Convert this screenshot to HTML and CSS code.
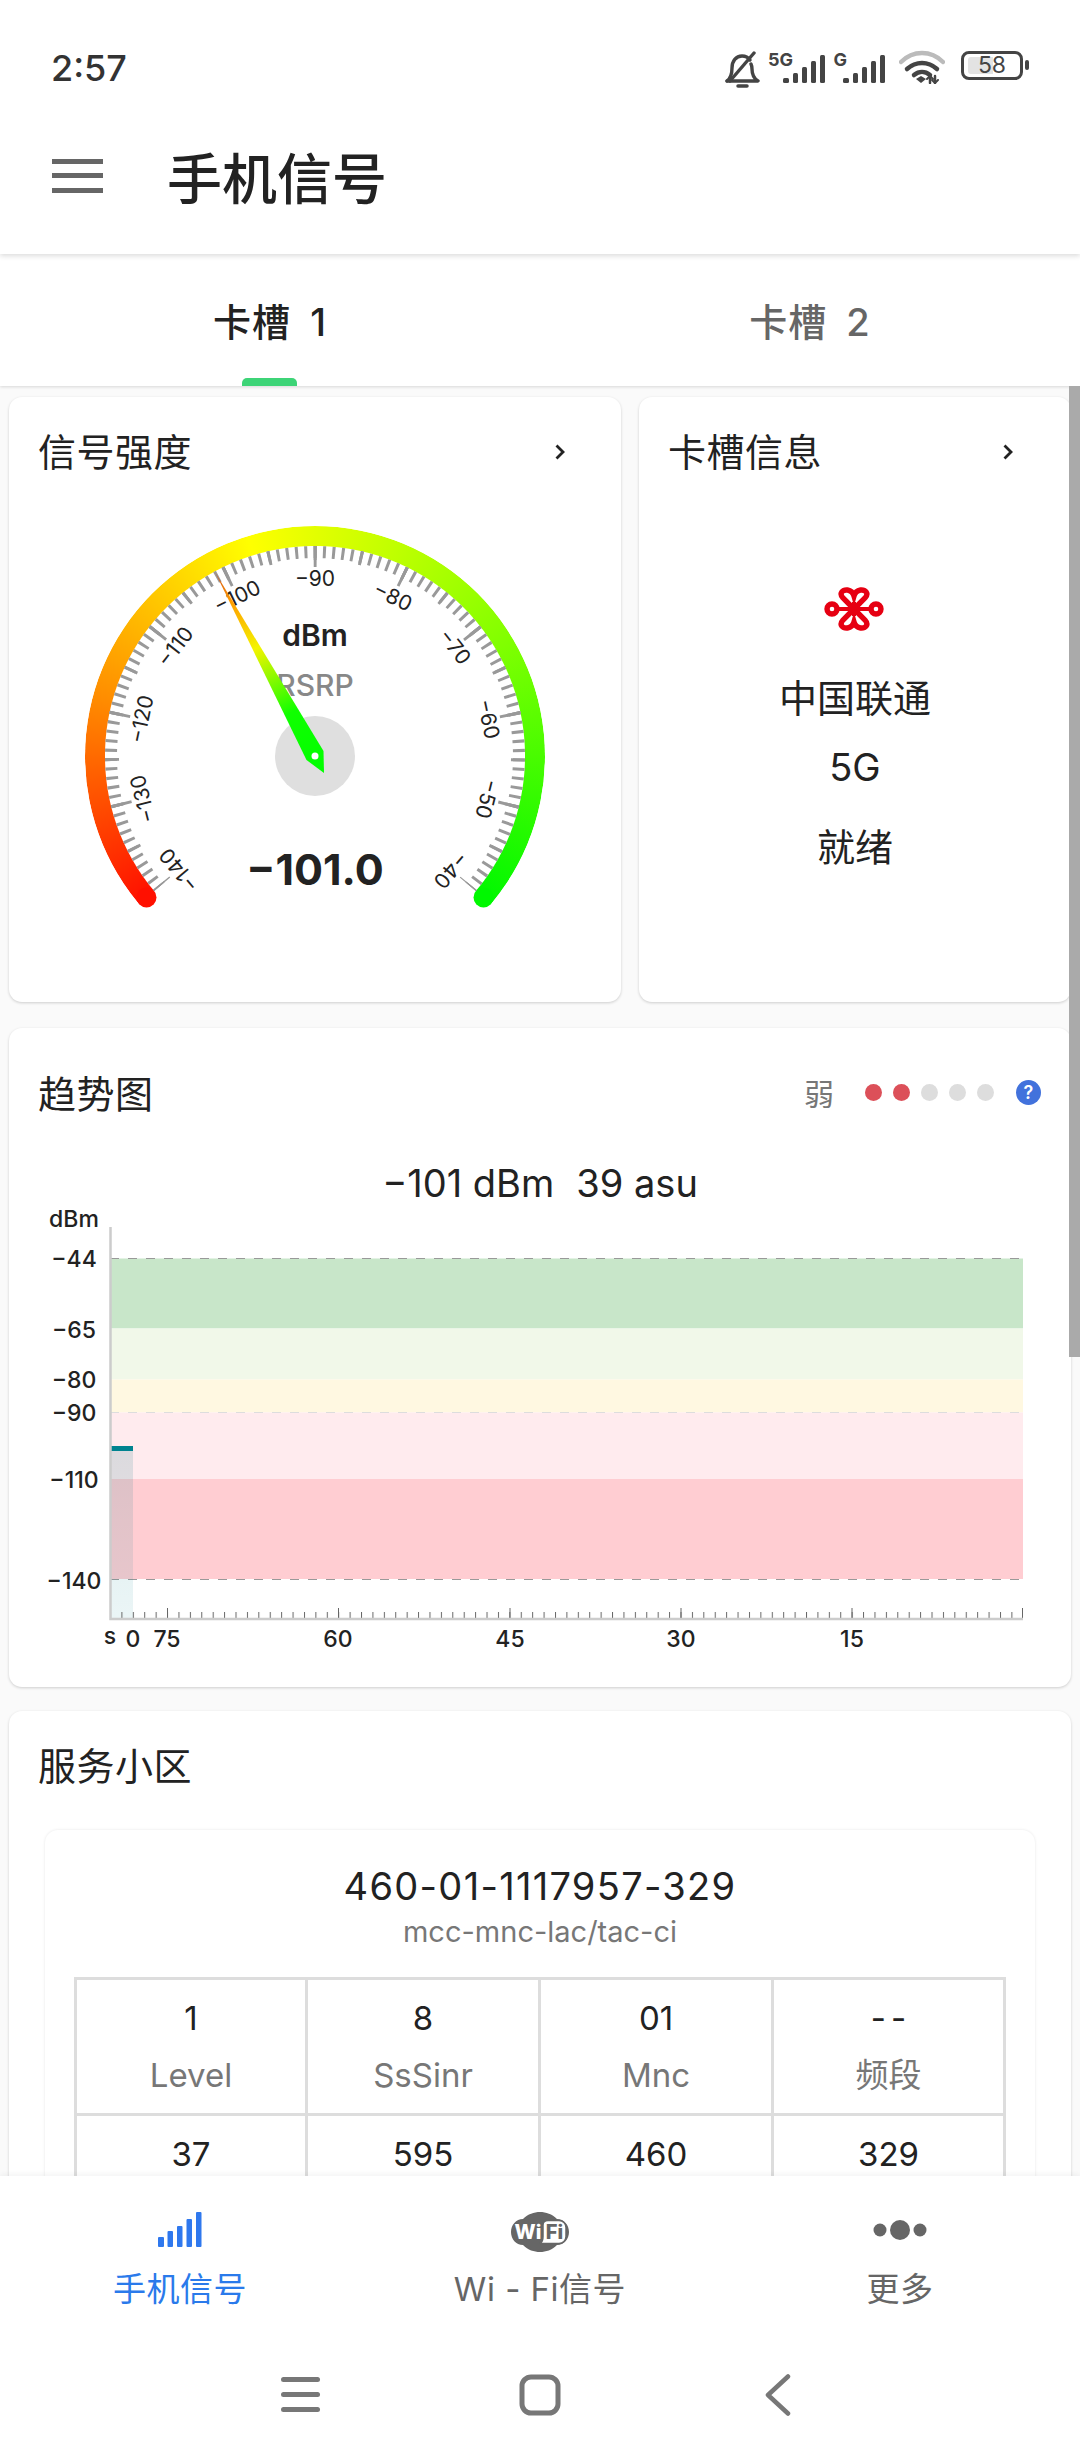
FILE: index.html
```html
<!DOCTYPE html>
<html lang="zh-CN">
<head>
<meta charset="utf-8">
<title>手机信号</title>
<link rel="stylesheet" href="styles.css">
</head>
<body>
<div class="screen">
  <header class="top">
    <div class="status">
      <span class="time">2:57</span>
      <div class="status-icons">
        <svg class="ic-bell" width="36" height="38" viewBox="0 0 36 38" fill="none" stroke="#444" stroke-width="3.400" stroke-linecap="round" stroke-linejoin="round">
          <path d="M3 30c4-3 5-7 5-13C8 10 12 5 18 5c3 0 6 1 8 4"/>
          <path d="M27 13c1 2 1 3 1 5 0 5 1 9 6 12H3"/>
          <path d="M30 2L6 30"/>
          <path d="M14 35h9" stroke-width="3.500"/>
        </svg>
        <div class="net"><span class="net-label">5G</span>
          <svg width="43" height="28" viewBox="0 0 43 28" fill="#444"><rect x="0" y="23" width="6" height="5" rx="1.500"/><rect x="10" y="18" width="5" height="10" rx="1.500"/><rect x="19" y="12" width="5" height="16" rx="1.500"/><rect x="28" y="6" width="5" height="22" rx="1.500"/><rect x="37" y="0" width="5" height="28" rx="1.500"/></svg>
        </div>
        <div class="net net-g"><span class="net-label">G</span>
          <svg width="43" height="28" viewBox="0 0 43 28" fill="#444"><rect x="0" y="23" width="6" height="5" rx="1.500"/><rect x="10" y="18" width="5" height="10" rx="1.500"/><rect x="19" y="12" width="5" height="16" rx="1.500"/><rect x="28" y="6" width="5" height="22" rx="1.500"/><rect x="37" y="0" width="5" height="28" rx="1.500"/></svg>
        </div>
        <svg class="ic-wifi" width="46" height="34" viewBox="0 0 46 34" fill="none" stroke-linecap="round">
          <path d="M2 12C14 0 32 0 44 12" stroke="#bbb" stroke-width="4.500"/>
          <path d="M8 19c9-8 21-8 30 0" stroke="#444" stroke-width="4.500"/>
          <path d="M15 25c5-4 11-4 16 0" stroke="#444" stroke-width="4.500"/>
          <path d="M17 29l5-3 5 3-5 4z" fill="#444" stroke="none"/>
          <path d="M31 26v7M36 33v-7" stroke="#444" stroke-width="2.500"/>
          <path d="M28 29l3-3 3 3M33 30l3 3 3-3" stroke="#444" stroke-width="2"/>
        </svg>
        <div class="battery"><div class="battery-body"><span class="battery-fill"></span><span class="battery-num">58</span></div><span class="battery-tip"></span></div>
      </div>
    </div>
    <div class="appbar">
      <div class="menu"><span></span><span></span><span></span></div>
      <h1 class="title">手机信号</h1>
    </div>
  </header>

  <nav class="tabs">
    <div class="tab tab-on">卡槽 1<span class="tab-bar"></span></div>
    <div class="tab">卡槽 2</div>
  </nav>

  <main class="content">
    <div class="scroll-thumb"></div>
    <section class="row">
      <article class="card card-signal">
        <div class="card-head"><h2 class="card-title">信号强度</h2>
          <svg class="chev" width="10" height="16" viewBox="0 0 10 16"><path d="M1.500 1.500L8 8l-6.500 6.500" fill="none" stroke="#222" stroke-width="2.800"/></svg>
        </div>
        <div class="gauge">
          <div class="ring"></div>
          <svg class="gauge-svg" width="612" height="460" viewBox="9 500 612 460">
            <defs>
              <linearGradient id="ng" gradientUnits="userSpaceOnUse" x1="324" y1="773" x2="215" y2="572">
                <stop offset="0" stop-color="#00ff00"/><stop offset=".3" stop-color="#10ff00"/><stop offset=".62" stop-color="#f4f400"/><stop offset=".86" stop-color="#ff9a00"/><stop offset="1" stop-color="#d0501a"/>
              </linearGradient>
            </defs>
            <circle cx="146.500" cy="897.400" r="10" fill="#ff1000"/>
            <circle cx="483.500" cy="897.400" r="10" fill="#00f800"/>
            <g fill="none" stroke="#999">
              <path d="M158.730 887.130A204 204 0 1 1 471.270 887.130" stroke-width="12" stroke-dasharray="3 6.257" stroke-dashoffset="1.500"/>
              <path d="M159.490 886.490A203 203 0 1 1 470.510 886.490" stroke-width="14" stroke-dasharray="3 43.060" stroke-dashoffset="1.500"/>
              <path d="M162.180 884.240A199.500 199.500 0 1 1 467.820 884.240" stroke-width="21" stroke-dasharray="3 87.531" stroke-dashoffset="1.500"/>
            </g>
            <g class="tick-labels">
              <text x="315" y="586" transform="rotate(-130 315 756)">−140</text>
              <text x="315" y="586" transform="rotate(-104 315 756)">−130</text>
              <text x="315" y="586" transform="rotate(-78 315 756)">−120</text>
              <text x="315" y="586" transform="rotate(-52 315 756)">−110</text>
              <text x="315" y="586" transform="rotate(-26 315 756)">−100</text>
              <text x="315" y="586">−90</text>
              <text x="315" y="586" transform="rotate(26 315 756)">−80</text>
              <text x="315" y="586" transform="rotate(52 315 756)">−70</text>
              <text x="315" y="586" transform="rotate(78 315 756)">−60</text>
              <text x="315" y="586" transform="rotate(104 315 756)">−50</text>
              <text x="315" y="586" transform="rotate(130 315 756)">−40</text>
            </g>
            <text class="g-unit" x="315" y="646">dBm</text>
            <text class="g-name" x="315" y="696">RSRP</text>
            <text class="g-value" x="315" y="885">−101.0</text>
            <circle cx="315" cy="756" r="40" fill="#dfdfdf"/>
            <path d="M215 572L323.500 751L324 773L306.500 760Z" fill="url(#ng)"/>
            <circle cx="315" cy="756" r="3.500" fill="#fff"/>
          </svg>
        </div>
      </article>
      <article class="card card-sim">
        <div class="card-head"><h2 class="card-title">卡槽信息</h2>
          <svg class="chev" width="10" height="16" viewBox="0 0 10 16"><path d="M1.500 1.500L8 8l-6.500 6.500" fill="none" stroke="#222" stroke-width="2.800"/></svg>
        </div>
        <svg class="logo" width="60" height="44" viewBox="0 0 60 44" fill="none" stroke="#e60012" stroke-width="5.400">
          <path d="M30 22L19 11C14.500 6 19 2.500 23.500 3 26.500 3.500 29 5.500 30 9 31 5.500 33.500 3.500 36.500 3 41 2.500 45.500 6 41 11L30 22"/>
          <path d="M30 22L19 33C14.500 38 19 41.500 23.500 41 26.500 40.500 29 38.500 30 35 31 38.500 33.500 40.500 36.500 41 41 41.500 45.500 38 41 33L30 22"/>
          <circle cx="8" cy="22" r="5"/>
          <circle cx="52" cy="22" r="5"/>
          <path d="M13 22H47" stroke-width="4"/>
          <path d="M30 15v14" stroke-width="4"/>
        </svg>
        <p class="sim-name">中国联通</p>
        <p class="sim-net">5G</p>
        <p class="sim-state">就绪</p>
      </article>
    </section>

    <section class="card card-trend">
      <div class="trend-head">
        <h2 class="card-title">趋势图</h2>
        <div class="strength">
          <span class="strength-text">弱</span>
          <div class="dots"><i class="dot dot-on"></i><i class="dot dot-on"></i><i class="dot"></i><i class="dot"></i><i class="dot"></i></div>
          <span class="help">?</span>
        </div>
      </div>
      <p class="trend-value"><span>−101 dBm</span><span>39 asu</span></p>
      <svg class="chart" width="1062" height="460" viewBox="9 1200 1062 460">
        <defs>
          <linearGradient id="cur" x1="0" y1="0" x2="0" y2="1"><stop offset="0" stop-color="#00707a" stop-opacity=".14"/><stop offset="1" stop-color="#00838f" stop-opacity=".08"/></linearGradient>
          <pattern id="minor" x="110" y="1612" width="11.410" height="6" patternUnits="userSpaceOnUse"><rect x="0" width="1" height="6" fill="#666"/></pattern>
        </defs>
        <rect x="110" y="1258.500" width="913" height="70" fill="#c8e6c9"/>
        <rect x="110" y="1328.500" width="913" height="51" fill="#f1f8e9"/>
        <rect x="110" y="1379.500" width="913" height="33" fill="#fff8e1"/>
        <rect x="110" y="1412.500" width="913" height="66.500" fill="#ffebee"/>
        <rect x="110" y="1479" width="913" height="100" fill="#ffcdd2"/>
        <g fill="none" stroke-width="1" stroke-dasharray="9 9">
          <path d="M110 1258.500H1023" stroke="#999"/>
          <path d="M110 1412.500H1023" stroke="#ddd"/>
          <path d="M110 1579.500H1023" stroke="#999"/>
        </g>
        <rect x="110" y="1451" width="23" height="167" fill="url(#cur)"/>
        <rect x="110" y="1446" width="23" height="5" fill="#00838f"/>
        <rect x="110" y="1612" width="913" height="6" fill="url(#minor)"/>
        <path d="M167.500 1608v10M338.500 1608v10M510 1608v10M681 1608v10M852 1608v10M1022.500 1608v10" stroke="#666" stroke-width="1"/>
        <path d="M110.500 1227V1619H1023" fill="none" stroke="#ccc" stroke-width="2.500"/>
        <g class="axis-labels">
          <text x="74" y="1227">dBm</text>
          <text x="74" y="1267">−44</text>
          <text x="74" y="1338">−65</text>
          <text x="74" y="1388">−80</text>
          <text x="74" y="1421">−90</text>
          <text x="74" y="1488">−110</text>
          <text x="74" y="1589">−140</text>
          <text x="110" y="1644">s</text>
          <text x="133" y="1647">0</text>
          <text x="167" y="1647">75</text>
          <text x="338" y="1647">60</text>
          <text x="510" y="1647">45</text>
          <text x="681" y="1647">30</text>
          <text x="852" y="1647">15</text>
        </g>
      </svg>
    </section>

    <section class="card card-cell">
      <h2 class="card-title cell-title">服务小区</h2>
      <div class="cell">
        <p class="cell-id">460-01-1117957-329</p>
        <p class="cell-key">mcc-mnc-lac/tac-ci</p>
        <div class="grid">
          <div class="gc"><b>1</b><span>Level</span></div>
          <div class="gc"><b>8</b><span>SsSinr</span></div>
          <div class="gc"><b>01</b><span>Mnc</span></div>
          <div class="gc"><b class="dash">--</b><span>频段</span></div>
          <div class="gc"><b>37</b></div>
          <div class="gc"><b>595</b></div>
          <div class="gc"><b>460</b></div>
          <div class="gc"><b>329</b></div>
        </div>
      </div>
    </section>
  </main>

  <footer class="bottom">
    <nav class="nav">
      <div class="nav-item nav-on">
        <svg class="nav-icon" width="46" height="36" viewBox="0 0 46 36" fill="#2f78ee"><rect x="1" y="25" width="6" height="10" rx="1"/><rect x="10.500" y="19" width="5.500" height="16" rx="1"/><rect x="20" y="14" width="5.500" height="21" rx="1"/><rect x="29.500" y="7" width="5.500" height="28" rx="1"/><rect x="39" y="0" width="5.500" height="35" rx="1"/></svg>
        <span>手机信号</span>
      </div>
      <div class="nav-item">
        <svg class="nav-icon" width="58" height="40" viewBox="0 0 58 40">
          <path d="M12 7C17 2 23 0 29 0s12 2 17 7c7 0 12 6 12 13s-5 13-12 13C41 38 35 40 29 40s-12-2-17-7C5 33 0 27 0 20S5 7 12 7z" fill="#666"/>
          <path d="M37 8.500h11a7 7 0 0 1 7 7v9a7 7 0 0 1-7 7H29c2-1 3-3 3-7V13c0-3 2-4.500 5-4.500z" fill="#fff" stroke="#666" stroke-width="1.500"/>
          <text class="wifi-w" x="17" y="27">Wi</text>
          <text class="wifi-f" x="43.500" y="27">Fi</text>
        </svg>
        <span>Wi - Fi信号</span>
      </div>
      <div class="nav-item">
        <svg class="nav-icon" width="54" height="36" viewBox="0 0 54 36" fill="#666"><circle cx="7" cy="18" r="6.500"/><circle cx="27" cy="18" r="10"/><circle cx="47" cy="18" r="6.500"/></svg>
        <span>更多</span>
      </div>
    </nav>
    <div class="sysnav">
      <svg width="40" height="40" viewBox="0 0 40 40" fill="#777"><rect x="0" y="3" width="39" height="5" rx="2.500"/><rect x="0" y="18" width="39" height="5" rx="2.500"/><rect x="0" y="33" width="39" height="5" rx="2.500"/></svg>
      <svg width="42" height="42" viewBox="0 0 42 42" fill="none" stroke="#777" stroke-width="5"><rect x="3" y="3" width="36" height="36" rx="9"/></svg>
      <svg width="26" height="42" viewBox="0 0 26 42" fill="none" stroke="#777" stroke-width="4.500" stroke-linecap="round" stroke-linejoin="round"><path d="M23 2.500L3 21l20 18.500"/></svg>
    </div>
  </footer>
</div>
</body>
</html>
```

FILE: styles.css
```css
* { box-sizing: border-box; }
html, body { margin: 0; padding: 0; background: #fff; }
body { font-family: "Inter", "Noto Sans CJK SC", sans-serif; color: #222; }
h1, h2, p { margin: 0; font-weight: 400; }

.screen { width: 1080px; height: 2460px; overflow: hidden; display: flex; flex-direction: column; position: relative; }

/* header */
.top { height: 254px; background: #fff; position: relative; z-index: 3; box-shadow: 0 2px 5px rgba(0,0,0,.14); flex: none; }
.status { height: 96px; display: flex; align-items: center; justify-content: space-between; padding: 38px 51px 0 51px; }
.time { font-size: 36px; font-weight: 500; color: #333; line-height: 1; margin-top: 2px; }
.status-icons { display: flex; align-items: flex-start; height: 40px; margin-top: 5px; }
.ic-bell { margin-right: 7px; margin-top: 1px; }
.net { position: relative; width: 43px; height: 35px; margin-left: 16px; display: flex; align-items: flex-end; margin-top: -2px; }
.net-g { margin-left: 17px; }
.net-label { position: absolute; right: 100%; top: 3px; margin-right: -10px; font-size: 18px; font-weight: 700; color: #444; line-height: 18px; }
.net-g .net-label { margin-right: -4px; font-size: 18px; }
.ic-wifi { margin-left: 13px; }
.battery { display: flex; align-items: center; margin-left: 16px; margin-top: 1px; }
.battery-body { width: 62px; height: 29px; border: 3px solid #444; border-radius: 8px; position: relative; display: flex; align-items: center; justify-content: center; }
.battery-fill { position: absolute; left: 4px; top: 3px; bottom: 3px; width: 25px; background: #e3e3e3; border-radius: 3px 0 0 3px; }
.battery-num { position: relative; font-size: 23px; color: #444; line-height: 1; }
.battery-tip { width: 4px; height: 10px; background: #444; border-radius: 2px; margin-left: 2px; }

.appbar { height: 158px; display: flex; align-items: center; padding-left: 52px; }
.menu { width: 51px; display: flex; flex-direction: column; gap: 9.500px; margin-right: 64px; margin-top: 1px; }
.menu span { height: 5px; background: #666; }
.title { font-size: 55px; font-weight: 500; color: #222; line-height: 1; margin-top: 9px; }

/* tabs */
.tabs { height: 132px; background: #fff; display: flex; position: relative; z-index: 2; flex: none; box-shadow: 0 1px 3px rgba(0,0,0,.14); }
.tab { width: 50%; display: flex; align-items: center; justify-content: center; font-size: 38px; font-weight: 500; color: #666; position: relative; letter-spacing: 1px; word-spacing: 8px; padding-bottom: 2px; }
.tab-on { color: #222; }
.tab-bar { position: absolute; left: 50%; bottom: 0; width: 55px; height: 8px; margin-left: -28px; background: #3dd477; border-radius: 5px 5px 0 0; }

/* content */
.content { flex: 1; min-height: 0; background: #fafafa; padding: 11px 9px 0; position: relative; overflow: hidden; display: flex; flex-direction: column; }
.scroll-thumb { position: absolute; right: 0; top: 0; width: 11px; height: 971px; background: #aaa; z-index: 2; }
.row { display: flex; gap: 18px; height: 605px; flex: none; }
.card { background: #fff; border-radius: 13px; box-shadow: 0 1px 3px rgba(0,0,0,.18); }
.card-signal { width: 612px; }
.card-sim { width: 432px; display: flex; flex-direction: column; align-items: center; }
.card-head { width: 100%; height: 103px; display: flex; align-items: center; justify-content: space-between; padding: 0 56px 0 29px; }
.card-sim .card-head { padding: 0 58px 0 29px; }
.card-title { font-size: 38px; line-height: 1; letter-spacing: .5px; color: #222; }
.card-head .card-title { margin-top: 7px; }
.chev { margin-top: 6px; }
.gauge { position: relative; width: 612px; height: 460px; }
.ring { position: absolute; left: 76px; top: 26px; width: 460px; height: 460px; border-radius: 50%;
  background: conic-gradient(from -130deg, #ff1000 0deg, #ff8c00 55deg, #ffff00 113deg, #7fff00 190deg, #00f800 260deg, transparent 260deg);
  -webkit-mask: radial-gradient(closest-side, transparent 209.500px, #000 210.500px);
  mask: radial-gradient(closest-side, transparent 209.500px, #000 210.500px); }
.gauge-svg { position: relative; display: block; }
.tick-labels text { font-size: 21px; text-anchor: middle; fill: #222; }
.g-unit { font-size: 30px; font-weight: 600; text-anchor: middle; fill: #222; }
.g-name { font-size: 30px; font-weight: 500; text-anchor: middle; fill: #888; }
.g-value { font-size: 43px; font-weight: 700; text-anchor: middle; fill: #222; }

.logo { margin-top: 87px; margin-left: -2px; display: block; }
.sim-name { font-size: 38px; line-height: 1; margin-top: 48px; }
.sim-net { font-size: 38px; line-height: 1; margin-top: 31px; }
.sim-state { font-size: 38px; line-height: 1; margin-top: 42px; }

.card-trend { flex: none; height: 659px; margin-top: 26px; }
.trend-head { height: 132px; display: flex; align-items: center; justify-content: space-between; padding: 0 30px 0 29px; }
.strength { display: flex; align-items: center; }
.strength-text { font-size: 30px; color: #777; margin-right: 31px; line-height: 1; }
.dots { display: flex; gap: 11px; margin-right: 22px; margin-top: -3px; }
.dot { width: 17px; height: 17px; border-radius: 50%; background: #ddd; display: block; }
.dot-on { background: #dc5059; }
.help { width: 25px; height: 25px; border-radius: 50%; background: #4272dc; color: #fff; font-size: 18px; font-weight: 600; line-height: 25px; text-align: center; margin-top: -3px; }
.trend-value { height: 40px; font-size: 38px; line-height: 46px; display: flex; justify-content: center; align-items: flex-start; gap: 22px; color: #222; }
.chart { display: block; }
.axis-labels text { font-size: 23px; font-weight: 500; text-anchor: middle; fill: #222; }

.card-cell { flex: none; margin-top: 24px; height: 700px; padding: 36px 36px 0; }
.cell-title { margin-left: -7px; }
.cell { margin-top: 45px; border-radius: 13px; box-shadow: 0 0 3px rgba(0,0,0,.1); padding: 36px 29px 0; height: 500px; text-align: center; }
.cell-id { font-size: 38px; line-height: 40px; letter-spacing: 1.300px; }
.cell-key { font-size: 29px; line-height: 34px; color: #777; margin-top: 9px; }
.grid { margin-top: 28px; display: grid; grid-template-columns: 231px 233px 233px 1fr; border-top: 3px solid #ddd; border-left: 3px solid #ddd; }
.gc { height: 136px; border-right: 3px solid #ddd; border-bottom: 3px solid #ddd; display: flex; flex-direction: column; align-items: center; padding-top: 18px; }
.gc b { font-weight: 400; font-size: 33px; line-height: 40px; color: #222; }
.gc .dash { letter-spacing: 5px; margin-right: -5px; }
.gc span { font-size: 33px; line-height: 40px; color: #777; margin-top: 17px; }

/* footer */
.bottom { height: 284px; flex: none; background: #fff; position: relative; z-index: 3; box-shadow: 0 -2px 6px rgba(0,0,0,.05); display: flex; flex-direction: column; }
.nav { display: flex; height: 164px; }
.nav-item { width: 33.333%; display: flex; flex-direction: column; align-items: center; font-size: 33px; color: #666; position: relative; }
.nav-item .nav-icon { position: absolute; top: 36px; left: 50%; transform: translateX(-50%); }
.nav-item span { margin-top: 91px; line-height: 44px; letter-spacing: .5px; }
.nav-on { color: #2a7aeb; }
.wifi-w { font-size: 20px; font-weight: 800; fill: #fff; text-anchor: middle; }
.wifi-f { font-size: 20px; font-weight: 800; fill: #666; text-anchor: middle; }
.sysnav { flex: 1; display: flex; justify-content: center; align-items: flex-start; padding: 34px 8px 0 0; }
.sysnav svg:nth-child(1) { margin-right: 198px; }
.sysnav svg:nth-child(2) { margin-right: 204px; }
```
